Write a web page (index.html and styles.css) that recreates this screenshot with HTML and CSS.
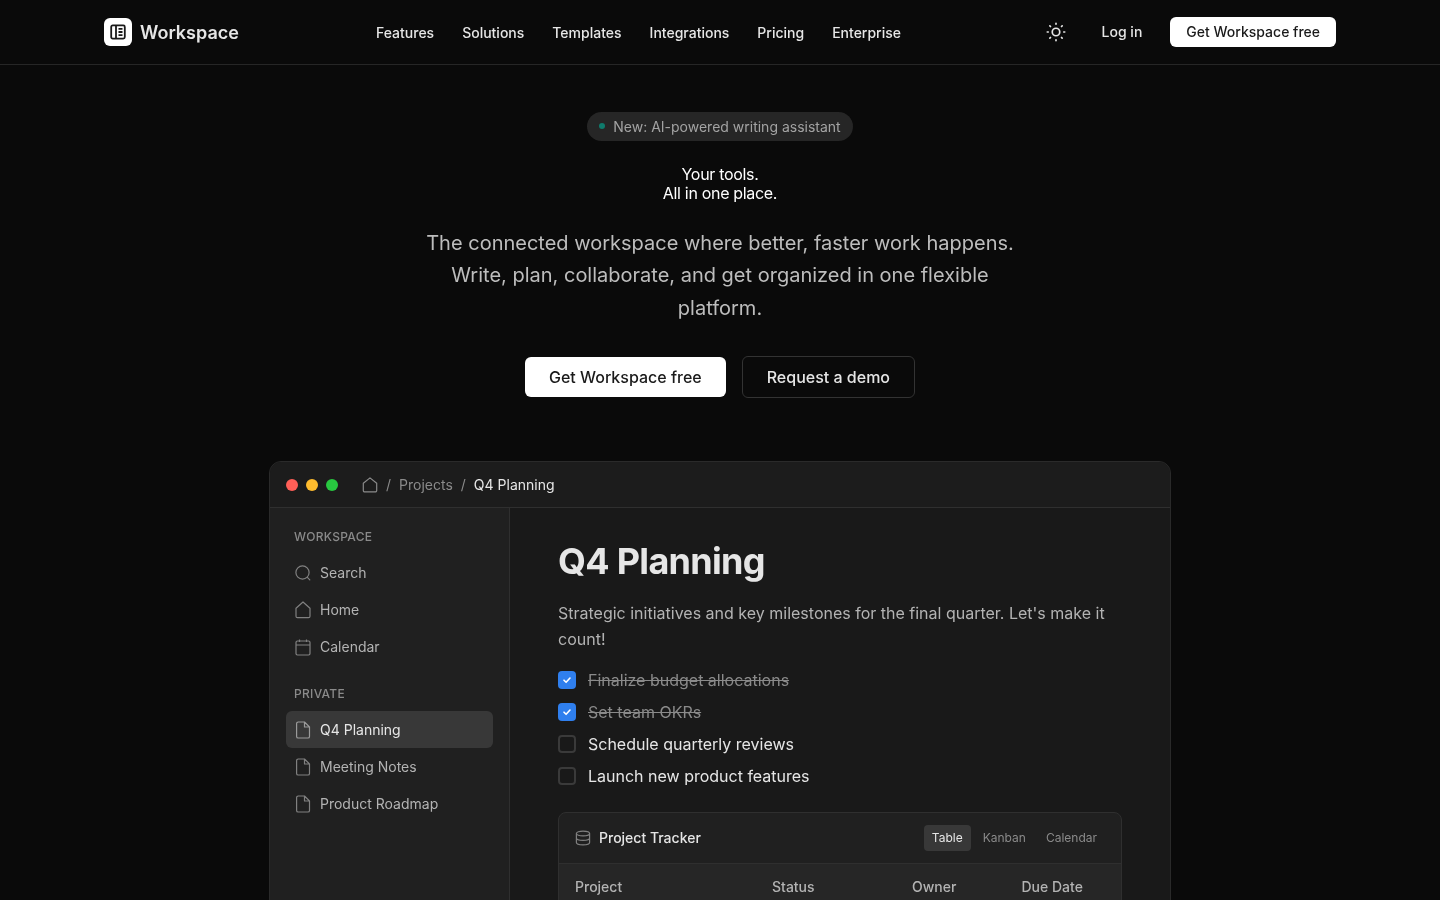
FILE: index.html
```html
<!DOCTYPE html>
<html lang="en">
<head>
<meta charset="utf-8">
<title>Workspace</title>
<link rel="stylesheet" href="styles.css">
</head>
<body>
<header class="topbar">
  <div class="topbar-inner">
    <a class="brand">
      <span class="brand-mark">
        <svg width="16" height="16" viewBox="0 0 16 16" fill="none" stroke="#1a1a1a" stroke-width="1.8"><rect x="1.2" y="1.4" width="13.6" height="13.2" rx="1.5"/><path d="M6 1.500v13M8.500 4.800h4M8.500 8h4M8.500 11.200h4"/></svg>
      </span>
      <span class="brand-name">Workspace</span>
    </a>
    <nav class="nav">
      <a>Features</a><a>Solutions</a><a>Templates</a><a>Integrations</a><a>Pricing</a><a>Enterprise</a>
    </nav>
    <div class="actions">
      <svg class="sun" width="20" height="20" viewBox="0 0 24 24" fill="none" stroke="#e6e6e6" stroke-width="2" stroke-linecap="round"><circle cx="12" cy="12" r="4.5"/><path d="M12 1.500v1.200M12 21.300v1.200M1.500 12h1.200M21.300 12h1.200M4.600 4.600l.8.8M18.600 18.600l.8.8M4.600 19.400l.8-.8M18.600 5.400l.8-.8"/></svg>
      <a class="login">Log in</a>
      <a class="btn-small">Get Workspace free</a>
    </div>
  </div>
</header>

<main>
  <section class="hero">
    <div class="pill"><span class="pill-dot"></span>New: AI-powered writing assistant</div>
    <h1 class="hero-title">Your tools.<br>All in one place.</h1>
    <p class="hero-sub">The connected workspace where better, faster work happens. Write, plan, collaborate, and get organized in one flexible platform.</p>
    <div class="cta">
      <a class="btn btn-primary">Get Workspace free</a>
      <a class="btn btn-ghost">Request a demo</a>
    </div>
  </section>

  <section class="window">
    <div class="window-bar">
      <div class="lights"><span class="light red"></span><span class="light yellow"></span><span class="light green"></span></div>
      <div class="crumbs">
        <svg class="icon" width="16" height="16" viewBox="0 0 16 16" fill="none" stroke="#8a8a8a" stroke-width="1.2" stroke-linejoin="round"><path d="M1.300 6.300 8 .9l6.700 5.400v7.200a1.400 1.400 0 0 1-1.400 1.400H2.700a1.400 1.400 0 0 1-1.400-1.400z"/></svg>
        <span class="sep">/</span><span class="crumb">Projects</span><span class="sep">/</span><span class="crumb current">Q4 Planning</span>
      </div>
    </div>
    <div class="window-body">
      <aside class="side">
        <div class="side-label">WORKSPACE</div>
        <a class="side-item">
          <svg class="icon" width="18" height="18" viewBox="0 0 18 18" fill="none" stroke="#808080" stroke-width="1.2" stroke-linecap="round"><circle cx="8.500" cy="8.500" r="6.600"/><path d="m13.400 13.400 2.400 2.400"/></svg>
          Search</a>
        <a class="side-item">
          <svg class="icon" width="18" height="18" viewBox="0 0 18 18" fill="none" stroke="#808080" stroke-width="1.2" stroke-linejoin="round"><path d="M2 7.200 9 1l7 6.200v8a1.500 1.500 0 0 1-1.500 1.500h-11A1.500 1.500 0 0 1 2 15.200z"/></svg>
          Home</a>
        <a class="side-item">
          <svg class="icon" width="18" height="18" viewBox="0 0 18 18" fill="none" stroke="#808080" stroke-width="1.2"><rect x="2" y="3" width="14" height="14" rx="1.400"/><path d="M2 7h14M5.500 1.500V4M12.500 1.500V4"/></svg>
          Calendar</a>
        <div class="side-label second">PRIVATE</div>
        <a class="side-item active">
          <svg class="icon" width="18" height="18" viewBox="0 0 18 18" fill="none" stroke="#9a9a9a" stroke-width="1.2" stroke-linejoin="round"><path d="M2.600 2.600A1.600 1.600 0 0 1 4.200 1h6.300l5 5v9.400a1.600 1.600 0 0 1-1.600 1.600H4.200a1.600 1.600 0 0 1-1.600-1.600zM10.500 1v5h5"/></svg>
          Q4 Planning</a>
        <a class="side-item">
          <svg class="icon" width="18" height="18" viewBox="0 0 18 18" fill="none" stroke="#808080" stroke-width="1.2" stroke-linejoin="round"><path d="M2.600 2.600A1.600 1.600 0 0 1 4.200 1h6.300l5 5v9.400a1.600 1.600 0 0 1-1.600 1.600H4.200a1.600 1.600 0 0 1-1.600-1.600zM10.500 1v5h5"/></svg>
          Meeting Notes</a>
        <a class="side-item">
          <svg class="icon" width="18" height="18" viewBox="0 0 18 18" fill="none" stroke="#808080" stroke-width="1.2" stroke-linejoin="round"><path d="M2.600 2.600A1.600 1.600 0 0 1 4.200 1h6.300l5 5v9.400a1.600 1.600 0 0 1-1.600 1.600H4.200a1.600 1.600 0 0 1-1.600-1.600zM10.500 1v5h5"/></svg>
          Product Roadmap</a>
      </aside>
      <div class="doc">
        <h2 class="doc-title">Q4 Planning</h2>
        <p class="doc-text">Strategic initiatives and key milestones for the final quarter. Let's make it count!</p>
        <ul class="todos">
          <li class="todo done"><span class="box"><svg width="10" height="10" viewBox="0 0 10 10" fill="none" stroke="#fff" stroke-width="1.600" stroke-linecap="round" stroke-linejoin="round"><path d="m2 5.200 2.100 2.100L8 3"/></svg></span><span>Finalize budget allocations</span></li>
          <li class="todo done"><span class="box"><svg width="10" height="10" viewBox="0 0 10 10" fill="none" stroke="#fff" stroke-width="1.600" stroke-linecap="round" stroke-linejoin="round"><path d="m2 5.200 2.100 2.100L8 3"/></svg></span><span>Set team OKRs</span></li>
          <li class="todo"><span class="box"></span><span>Schedule quarterly reviews</span></li>
          <li class="todo"><span class="box"></span><span>Launch new product features</span></li>
        </ul>
        <div class="tracker">
          <div class="tracker-head">
            <div class="tracker-name">
              <svg width="16" height="16" viewBox="0 0 16 16" fill="none" stroke="#808080" stroke-width="1.2"><ellipse cx="8" cy="3.500" rx="6.600" ry="2.400"/><path d="M1.400 3.500v9c0 1.300 2.900 2.400 6.600 2.400s6.600-1.100 6.600-2.400v-9M1.400 8c0 1.300 2.900 2.400 6.600 2.400s6.600-1.100 6.600-2.400"/></svg>
              <span class="tracker-label">Project Tracker</span>
            </div>
            <div class="tabs"><span class="tab on">Table</span><span class="tab">Kanban</span><span class="tab">Calendar</span></div>
          </div>
          <div class="table-row">
            <span>Project</span><span>Status</span><span>Owner</span><span>Due Date</span>
          </div>
        </div>
      </div>
    </div>
  </section>
</main>
</body>
</html>
```

FILE: styles.css
```css
* { box-sizing: border-box; margin: 0; padding: 0; }
html, body { height: 100%; }
body {
  background: #0a0a0a;
  color: #fff;
  font-family: Inter, "Liberation Sans", sans-serif;
  font-size: 16px;
  line-height: 1.5;
  overflow: hidden;
  -webkit-font-smoothing: antialiased;
  will-change: transform;
}
a { color: inherit; text-decoration: none; }
ul { list-style: none; }

.topbar { height: 65px; border-bottom: 1px solid #262626; }
.topbar-inner {
  width: 1232px;
  height: 64px;
  margin: 0 auto;
  display: flex;
  align-items: center;
  justify-content: space-between;
}
.brand { display: flex; align-items: center; gap: 8px; width: 272px; }
.brand-mark {
  width: 28px; height: 28px;
  background: #fff;
  border-radius: 6px;
  display: flex; align-items: center; justify-content: center;
}
.brand-name { font-size: 18px; font-weight: 600; color: #e6e6e6; }
.nav { display: flex; gap: 28px; font-size: 14px; font-weight: 500; color: #e6e6e6; margin-right: auto; }
.actions { display: flex; align-items: center; }
.sun { margin-right: 36px; }
.login { font-size: 14px; font-weight: 500; color: #e6e6e6; margin-right: 28px; margin-top: -2px; }
.btn-small {
  background: #fff; color: #1a1a1a;
  font-size: 14px; font-weight: 500;
  height: 30px; padding: 0 16px 2px;
  border-radius: 6px;
  display: flex; align-items: center;
}

.hero { display: flex; flex-direction: column; align-items: center; padding-top: 47px; }
.pill {
  height: 29px; padding: 0 12px;
  background: #262626;
  border-radius: 15px;
  display: flex; align-items: center; gap: 8px;
  font-size: 14px; color: #a3a3a3;
}
.pill-dot { width: 6px; height: 6px; border-radius: 50%; background: #0f7b6c; margin-top: -1px; }
.hero-title { font-size: 16px; font-weight: 400; line-height: 19.36px; letter-spacing: -0.32px; text-align: center; margin-top: 24px; color: #fff; }
.hero-sub {
  width: 600px;
  margin-top: 23px;
  font-size: 20px;
  line-height: 32.5px;
  text-align: center;
  color: #bdbdbd;
}
.cta { display: flex; align-items: center; gap: 16px; margin-top: 32px; }
.btn {
  display: flex; align-items: center;
  font-size: 16px; font-weight: 500;
  padding: 0 24px;
  border-radius: 6px;
}
.btn-primary { background: #fff; color: #1a1a1a; height: 40px; }
.btn-ghost { border: 1px solid #333; color: #e6e6e6; height: 42px; }

.window {
  width: 902px;
  margin: 63px auto 0;
  background: #191919;
  border: 1px solid #2a2a2a;
  border-radius: 12px;
  overflow: hidden;
}
.window-bar {
  height: 46px;
  background: #1c1c1c;
  border-bottom: 1px solid #2f2f2f;
  display: flex; align-items: center;
  padding: 0 16px;
}
.lights { display: flex; gap: 8px; }
.light { width: 12px; height: 12px; border-radius: 50%; }
.red { background: #ff5f57; }
.yellow { background: #febc2e; }
.green { background: #28c840; }
.crumbs { display: flex; align-items: center; margin-left: 24px; font-size: 14px; color: #8a8a8a; }
.sep { margin: 0 8px; color: #8a8a8a; }
.crumb.current { color: #e6e6e6; }
.window-body { display: flex; height: 600px; }
.side {
  width: 240px;
  flex: none;
  background: #202020;
  border-right: 1px solid #2f2f2f;
  padding: 16px;
}
.side-label {
  font-size: 12px; font-weight: 500;
  line-height: 18px;
  color: #8a8a8a;
  letter-spacing: 0.3px;
  padding: 4px 8px;
  margin-bottom: 4px;
}
.side-label.second { margin-top: 16px; }
.side-item {
  display: flex; align-items: center; gap: 8px;
  height: 37px; padding: 0 8px;
  border-radius: 6px;
  font-size: 14px; color: #b3b3b3;
}
.side-item.active { background: #383838; color: #e6e6e6; }
.icon { flex: none; }

.doc { flex: 1; padding: 32px 48px; }
.doc-title { font-size: 36px; font-weight: 700; line-height: 43px; color: #e6e6e6; letter-spacing: -0.7px; }
.doc-text { margin-top: 17px; font-size: 16px; line-height: 26px; color: #b3b3b3; }
.todos { margin-top: 12px; display: flex; flex-direction: column; }
.todo { display: flex; align-items: center; gap: 12px; height: 32px; font-size: 16px; color: #e6e6e6; }
.box {
  width: 18px; height: 18px;
  border: 2px solid #3a3a3a;
  border-radius: 4px;
  display: flex; align-items: center; justify-content: center;
  flex: none;
}
.done { color: #8a8a8a; }
.done span:last-child { text-decoration: line-through; }
.done .box { background: #2f7fee; border: none; }
.tracker {
  margin-top: 20px;
  background: #202020;
  border: 1px solid #2f2f2f;
  border-radius: 8px;
}
.tracker-head {
  height: 51px;
  border-bottom: 1px solid #2f2f2f;
  display: flex; align-items: center; justify-content: space-between;
  padding: 0 16px;
}
.tracker-name { display: flex; align-items: center; gap: 8px; font-size: 14px; font-weight: 500; color: #e6e6e6; }
.tracker-label { margin-top: -2px; }
.tabs { display: flex; gap: 4px; font-size: 12px; color: #8a8a8a; }
.tab { padding: 4px 8px; line-height: 18px; border-radius: 4px; }
.tab.on { background: #383838; color: #e6e6e6; }
.table-row {
  display: grid;
  grid-template-columns: 197px 140px 109.500px 1fr;
  padding: 0 16px 2px;
  height: 46px;
  align-items: center;
  background: #262626;
  font-size: 14px; font-weight: 500;
  color: #b3b3b3;
}
```
